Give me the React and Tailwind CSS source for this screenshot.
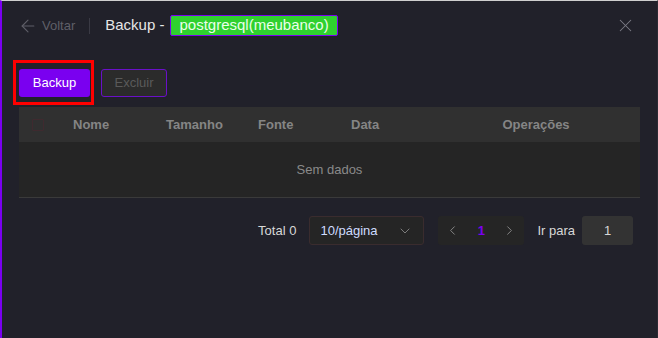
import { X, ArrowLeft, ChevronDown, ChevronLeft, ChevronRight } from 'lucide-react';

const columns = [
  { label: 'Nome', className: 'w-[93px] pl-4' },
  { label: 'Tamanho', className: 'w-[92px] pl-4' },
  { label: 'Fonte', className: 'w-[93px] pl-4' },
  { label: 'Data', className: 'w-[93px] pl-4' },
  { label: 'Operações', className: 'flex-1 text-center pl-1' },
];

const App = () => {
  return (
    <div
      className="h-[338px] w-[658px] bg-[#21212a] border-t border-t-[#cfcfcf] border-l-2 border-l-[#7a00f0] border-r border-r-[#2a2a33] text-[13px]"
      style={{ fontFamily: '"Liberation Sans", Arial, sans-serif' }}
    >
      {/* header */}
      <div className="flex items-center h-[49px] pl-[16px] pr-[21px]">
        <button className="flex items-center gap-[4px] text-[#5f5f68]">
          <ArrowLeft size={20} strokeWidth={1.3} />
          <span className="text-[13px]">Voltar</span>
        </button>
        <div className="w-px h-[16px] bg-[#3a3a44] ml-[14px] mr-[15px]"></div>
        <span className="text-[15px] text-[#e6e6e6]">Backup -</span>
        <span className="ml-[6px] px-[8px] h-[21px] flex items-center bg-[#2fd12f] border border-[#7a00f0] rounded-[2px] text-[15px] text-[#eaffea]">
          postgresql(meubanco)
        </span>
        <div className="flex-1"></div>
        <X size={21} strokeWidth={1.2} className="text-[#7c7c86]" />
      </div>

      <div className="px-[17px]">
        {/* actions */}
        <div className="flex items-start mt-[10px] h-[47px]">
          <div className="border-[3px] border-[#ff0000] pt-[6px] pb-[5px] pl-[3px] pr-[1px] -ml-[6px]">
            <button className="h-[28px] w-[71px] block bg-[#7a00f0] rounded-[3px] text-white text-[13px]">
              Backup
            </button>
          </div>
          <button className="ml-[7px] mt-[9px] h-[28px] w-[66px] bg-[#2b2b2b] border border-[#6a10c8] rounded-[3px] text-[#5a5a5a] text-[13px]">
            Excluir
          </button>
        </div>

        {/* table */}
        <div className="w-[621px]">
          <div className="flex items-center h-[35px] bg-[#303030] font-bold text-[#858585]">
            <div className="w-[38px] pl-[13px] flex items-center">
              <div className="w-[12px] h-[12px] shrink-0 border border-[#3f2a2f] rounded-[1px]"></div>
            </div>
            {columns.map((col) => (
              <div key={col.label} className={col.className}>{col.label}</div>
            ))}
          </div>
          <div className="h-[56px] bg-[#252525] border-b border-[#3a3a3a] flex items-center justify-center text-[#8a8a8a]">
            Sem dados
          </div>
        </div>

        {/* pagination */}
        <div className="flex items-center justify-end w-[614px] mt-[18px] text-[#d8d8d8]">
          <span>Total 0</span>
          <div className="ml-[13px] w-[115px] h-[29px] bg-[#252525] border border-[#3a2c2e] rounded-[3px] flex items-center pl-[10px] pr-[10px]">
            <span className="text-[#cfdcff] flex-1">10/página</span>
            <ChevronDown size={16} strokeWidth={1.3} className="text-[#8a8a8a]" />
          </div>
          <div className="ml-[14px] w-[86px] h-[29px] bg-[#252525] rounded-[3px] flex items-center justify-between px-[7px] text-[#8a8a8a]">
            <ChevronLeft size={15} strokeWidth={1.5} />
            <span className="text-[#7a00f0] font-bold">1</span>
            <ChevronRight size={15} strokeWidth={1.5} />
          </div>
          <span className="ml-[13px]">Ir para</span>
          <div className="ml-[7px] w-[51px] h-[29px] bg-[#333333] rounded-[3px] flex items-center justify-center">
            1
          </div>
        </div>
      </div>
    </div>
  );
};

export default App;
